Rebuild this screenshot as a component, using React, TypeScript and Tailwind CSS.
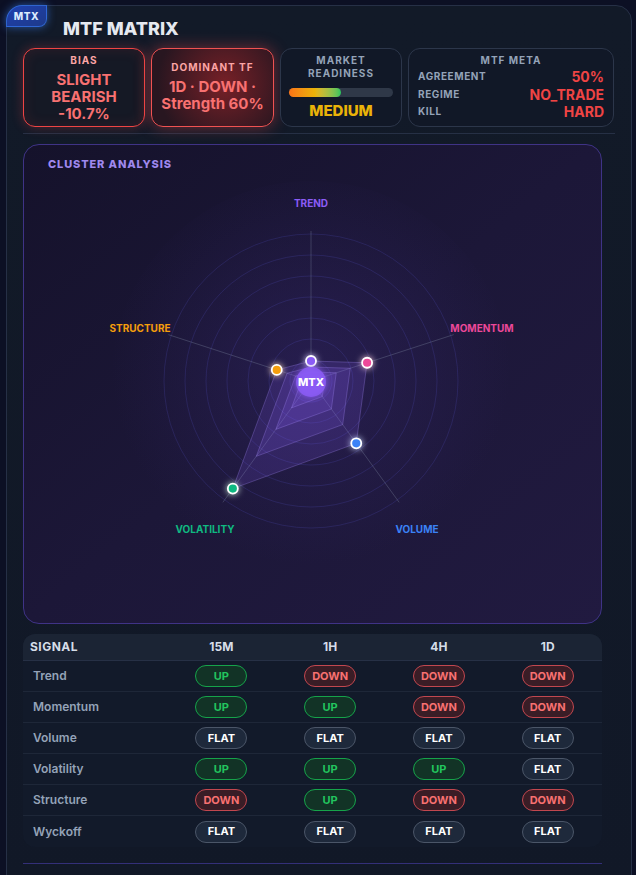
import React from 'react';

type Dir = 'UP' | 'DOWN' | 'FLAT';

const ROWS: { name: string; vals: Dir[] }[] = [
  { name: 'Trend', vals: ['UP', 'DOWN', 'DOWN', 'DOWN'] },
  { name: 'Momentum', vals: ['UP', 'UP', 'DOWN', 'DOWN'] },
  { name: 'Volume', vals: ['FLAT', 'FLAT', 'FLAT', 'FLAT'] },
  { name: 'Volatility', vals: ['UP', 'UP', 'UP', 'FLAT'] },
  { name: 'Structure', vals: ['DOWN', 'UP', 'DOWN', 'DOWN'] },
  { name: 'Wyckoff', vals: ['FLAT', 'FLAT', 'FLAT', 'FLAT'] },
];

const PILL: Record<Dir, string> = {
  UP: 'bg-[#123326] border-[#16a34a] text-[#22c55e]',
  DOWN: 'bg-[#3a1d26] border-[#c2474f] text-[#f87171]',
  FLAT: 'bg-[#1e293b] border-[#4b5668] text-white',
};

// radar axes: trend, momentum, volume, volatility, structure
const AXES = [
  { label: 'TREND', color: '#8b5cf6', r: 20 },
  { label: 'MOMENTUM', color: '#ec4899', r: 59 },
  { label: 'VOLUME', color: '#3b82f6', r: 77 },
  { label: 'VOLATILITY', color: '#10b981', r: 133 },
  { label: 'STRUCTURE', color: '#f59e0b', r: 36 },
];

const CX = 287;
const CY = 209;

const pt = (i: number, r: number) => {
  const a = ((-90 + 72 * i) * Math.PI) / 180;
  return [CX + r * Math.cos(a), CY + r * Math.sin(a)];
};

const LABEL_POS = [
  [287, 35],
  [458, 160],
  [393, 361],
  [181, 361],
  [116, 160],
];

const Radar = () => {
  const poly = (s: number) =>
    AXES.map((a, i) => pt(i, a.r * s).join(',')).join(' ');
  return (
    <svg width="578" height="451" viewBox="0 0 578 451" className="block">
      <defs>
        <radialGradient id="bgGlow" cx="50%" cy="46%" r="50%">
          <stop offset="0%" stopColor="#3b2a7a" stopOpacity="0.35" />
          <stop offset="100%" stopColor="#3b2a7a" stopOpacity="0" />
        </radialGradient>
        <filter id="glow" x="-100%" y="-100%" width="300%" height="300%">
          <feGaussianBlur stdDeviation="3" result="b" />
          <feMerge>
            <feMergeNode in="b" />
            <feMergeNode in="SourceGraphic" />
          </feMerge>
        </filter>
      </defs>
      <circle cx={CX} cy={CY} r="200" fill="url(#bgGlow)" />
      {[1, 2, 3, 4, 5, 6, 7].map((k) => (
        <circle key={k} cx={CX} cy={CY} r={k * 21} fill="none" stroke="#6366f1" strokeOpacity="0.16" />
      ))}
      {AXES.map((_, i) => {
        const [x, y] = pt(i, 150);
        return <line key={i} x1={CX} y1={CY} x2={x} y2={y} stroke="#94a3b8" strokeOpacity="0.28" />;
      })}
      {[1, 0.7, 0.45, 0.25].map((s) => (
        <polygon key={s} points={poly(s)} fill="#8b5cf6" fillOpacity="0.16" stroke="#a78bfa" strokeOpacity="0.3" />
      ))}
      {AXES.map((a, i) => {
        const [x, y] = pt(i, a.r);
        return (
          <circle key={a.label} cx={x} cy={y} r="5" fill={a.color} stroke="white" strokeWidth="1.8" filter="url(#glow)" />
        );
      })}
      <circle cx={CX} cy={CY + 1} r="15" fill="#8b5cf6" fillOpacity="0.85" filter="url(#glow)" />
      <text x={CX} y={CY + 5} textAnchor="middle" fill="white" fontSize="11" fontWeight="800" fontFamily="Inter, sans-serif">
        MTX
      </text>
      {AXES.map((a, i) => (
        <text
          key={a.label}
          x={LABEL_POS[i][0]}
          y={LABEL_POS[i][1]}
          textAnchor="middle"
          fill={a.color}
          fontSize="10"
          fontWeight="700"
          fontFamily="Inter, sans-serif"
        >
          {a.label}
        </text>
      ))}
    </svg>
  );
};

export default function App() {
  return (
    <div className="min-h-screen bg-[#0c1024] pt-[5px] pl-[6px] font-['Inter',sans-serif]">
      <div className="relative w-[626px] rounded-2xl border border-[#263046] bg-gradient-to-b from-[#121a28] to-[#111827] px-4 pt-[11px] pb-10">
        {/* badge */}
        <div className="absolute -left-px -top-px flex h-[22px] w-[41px] items-center justify-center rounded-tl-2xl rounded-br-lg border border-[#3b82f6]/60 bg-gradient-to-br from-[#1e40af] to-[#1e3a8a] text-[10px] font-extrabold tracking-wider text-[#dbeafe] shadow-[0_0_8px_rgba(59,130,246,0.6)]">
          MTX
        </div>

        <h1 className="ml-[40px] text-[18px] leading-[24px] font-extrabold text-[#e5e9f0]">MTF MATRIX</h1>

        {/* stat row */}
        <div className="mt-[7px] grid grid-cols-[122px_123px_122px_206px] gap-[6px]">
          <div className="flex h-[79px] flex-col items-center rounded-xl border border-[#ef4444] bg-[#151925] pt-[4px] shadow-[0_0_12px_rgba(239,68,68,0.3),inset_0_0_14px_rgba(239,68,68,0.12)]">
            <div className="text-[10px] font-bold tracking-[0.1em] text-[#fca5a5]">BIAS</div>
            <div className="mt-[3px] text-center text-[15px] leading-[17px] font-bold text-[#f87171]">
              <div>SLIGHT</div>
              <div>BEARISH</div>
              <div>-10.7%</div>
            </div>
          </div>
          <div className="flex h-[79px] flex-col items-center justify-center rounded-xl border border-[#f05252] bg-[radial-gradient(circle_at_60%_45%,rgba(220,38,38,0.5),rgba(40,22,32,1)_80%)] pb-[3px] shadow-[0_0_16px_rgba(239,68,68,0.45)]">
            <div className="text-[10px] font-bold tracking-[0.1em] text-[#fca5a5]">DOMINANT TF</div>
            <div className="mt-[3px] text-center text-[15px] leading-[17px] font-bold text-[#f87171]">
              <div>1D · DOWN ·</div>
              <div>Strength 60%</div>
            </div>
          </div>
          <div className="flex h-[79px] flex-col items-center rounded-xl border border-[#2c364a] bg-[#111827] px-2 pt-[5px]">
            <div className="text-center text-[10px] leading-[13px] font-bold tracking-[0.1em] text-[#94a3b8]">
              MARKET
              <br />
              READINESS
            </div>
            <div className="mt-[8px] h-[9px] w-full rounded-full bg-[#2f3848]">
              <div className="h-full w-1/2 rounded-full bg-gradient-to-r from-[#f97316] via-[#eab308] to-[#22c55e]" />
            </div>
            <div className="mt-[5px] text-[15px] leading-[18px] font-extrabold text-[#eab308]">MEDIUM</div>
          </div>
          <div className="flex h-[79px] flex-col rounded-xl border border-[#2c364a] bg-[#111827] px-[9px] pt-[4px]">
            <div className="text-center text-[10px] font-bold tracking-[0.1em] text-[#94a3b8]">MTF META</div>
            {[
              ['AGREEMENT', '50%'],
              ['REGIME', 'NO_TRADE'],
              ['KILL', 'HARD'],
            ].map(([k, v]) => (
              <div key={k} className="flex h-[17.5px] items-center justify-between">
                <span className="text-[10px] font-bold tracking-[0.06em] text-[#94a3b8]">{k}</span>
                <span className="text-[14px] font-bold text-[#ef4444]">{v}</span>
              </div>
            ))}
          </div>
        </div>

        <div className="mt-[6px] h-px bg-[#263045]" />

        <div className="mr-[13px]">
          {/* cluster analysis */}
          <div className="mt-[10px] h-[480px] overflow-hidden rounded-2xl border border-[#3f3386] bg-gradient-to-br from-[#15122b] via-[#1c1738] to-[#211a40]">
            <div className="pt-[11px] pl-[24px] text-[11px] leading-[16px] font-extrabold tracking-[0.08em] text-[#9f88ee]">
              CLUSTER ANALYSIS
            </div>
            <Radar />
          </div>

          {/* signal table */}
          <div className="mt-[10px] overflow-hidden rounded-xl bg-[#121a2a]">
            <div className="grid h-[27px] grid-cols-[144px_1fr_1fr_1fr_1fr] items-center border-b border-[#263045] bg-[#1b2434] text-[12px] font-bold text-[#d6dde8]">
              <div className="pl-[7px] tracking-[0.04em]">SIGNAL</div>
              <div className="text-center">15M</div>
              <div className="text-center">1H</div>
              <div className="text-center">4H</div>
              <div className="text-center">1D</div>
            </div>
            {ROWS.map((r, ri) => (
              <div
                key={r.name}
                className={`grid h-[31px] grid-cols-[144px_1fr_1fr_1fr_1fr] items-center ${
                  ri < ROWS.length - 1 ? 'border-b border-[#1e2738]' : ''
                }`}
              >
                <div className="pl-[10px] text-[12px] font-semibold text-[#94a3b8]">{r.name}</div>
                {r.vals.map((v, i) => (
                  <div key={i} className="flex justify-center">
                    <span
                      className={`flex h-[22px] w-[52px] items-center justify-center rounded-full border text-[11px] font-bold ${PILL[v]}`}
                    >
                      {v}
                    </span>
                  </div>
                ))}
              </div>
            ))}
          </div>

          <div className="mt-[16px] h-px bg-[#332f78]" />
        </div>
      </div>
    </div>
  );
}
